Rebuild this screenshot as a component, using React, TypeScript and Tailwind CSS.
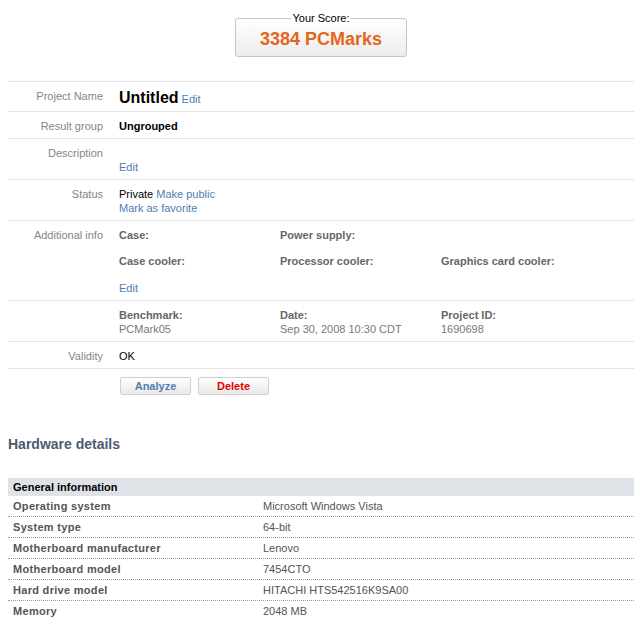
import React from 'react';

const link = 'text-[#4f7db3] cursor-pointer';

const Row = ({ label, children, border = true }: { label?: string; children: React.ReactNode; border?: boolean }) => (
  <div className={`flex items-start pt-[7px] pb-[5px] leading-[14px] ${border ? 'border-t border-[#e3e3e3]' : ''}`}>
    <div className="w-[95px] shrink-0 text-right text-[#858585]">{label}</div>
    <div className="ml-4 flex-1">{children}</div>
  </div>
);

const hardware = [
  ['Operating system', 'Microsoft Windows Vista'],
  ['System type', '64-bit'],
  ['Motherboard manufacturer', 'Lenovo'],
  ['Motherboard model', '7454CTO'],
  ['Hard drive model', 'HITACHI HTS542516K9SA00'],
  ['Memory', '2048 MB'],
];

const App = () => {
  return (
    <div className="w-[639px] h-[620px] overflow-hidden bg-white pl-2 pr-[5px] text-[11px] text-black font-['Liberation_Sans',Arial,sans-serif]">
      {/* score box */}
      <div className="flex justify-center pt-[18px]">
        <div className="relative flex h-[39px] w-[172px] items-center justify-center rounded-[3px] border border-[#c6c6c6] bg-gradient-to-b from-white to-[#ececec]">
          <span className="absolute -top-[8px] left-1/2 -translate-x-1/2 bg-white px-[1px] leading-[14px]">Your Score:</span>
          <span className="mt-[4px] text-[18px] font-bold text-[#e2661c]">3384 PCMarks</span>
        </div>
      </div>

      <div className="mt-[24px]">
        <Row label="Project Name">
          <span className="text-[16px] font-bold leading-[17px]">Untitled</span> <span className={link}>Edit</span>
        </Row>
        <Row label="Result group">
          <span className="font-bold">Ungrouped</span>
        </Row>
        <Row label="Description">
          <div className="h-[14px]" />
          <div className={link}>Edit</div>
        </Row>
        <Row label="Status">
          <div>
            Private <span className={link}>Make public</span>
          </div>
          <div className={link}>Mark as favorite</div>
        </Row>
        <Row label="Additional info">
          <div className="grid grid-cols-[161px_161px_161px] gap-y-[12px] font-bold text-[#666]">
            <div>Case:</div>
            <div>Power supply:</div>
            <div />
            <div>Case cooler:</div>
            <div>Processor cooler:</div>
            <div>Graphics card cooler:</div>
          </div>
          <div className={`mt-[13px] ${link}`}>Edit</div>
        </Row>
        <Row>
          <div className="grid grid-cols-[161px_161px_161px] text-[#777]">
            <div>
              <div className="font-bold text-[#666]">Benchmark:</div>
              <div>PCMark05</div>
            </div>
            <div>
              <div className="font-bold text-[#666]">Date:</div>
              <div>Sep 30, 2008 10:30 CDT</div>
            </div>
            <div>
              <div className="font-bold text-[#666]">Project ID:</div>
              <div>1690698</div>
            </div>
          </div>
        </Row>
        <Row label="Validity">OK</Row>
        <div className="flex border-t border-[#e3e3e3] pt-[8px] pl-[112px] gap-[7px]">
          <button className="h-[18px] w-[71px] rounded-[2px] border border-[#cfcfcf] bg-gradient-to-b from-white to-[#e9e9e9] text-[11px] font-bold text-[#4f7db3]">
            Analyze
          </button>
          <button className="h-[18px] w-[71px] rounded-[2px] border border-[#cfcfcf] bg-gradient-to-b from-white to-[#e9e9e9] text-[11px] font-bold text-[#e00000]">
            Delete
          </button>
        </div>
      </div>

      <h2 className="mt-[41px] text-[14px] font-bold leading-[17px] text-[#4e5a71]">Hardware details</h2>

      <div className="mt-[25px]">
        <div className="flex h-[18px] items-center bg-[#dfe3e8] px-[5px] font-bold">General information</div>
        {hardware.map(([k, v]) => (
          <div key={k} className="flex h-[21px] items-center border-b border-dotted border-[#9a9a9a] px-[5px] pt-[1px] text-[#555]">
            <div className="w-[250px] shrink-0 font-bold tracking-[0.3px]">{k}</div>
            <div>{v}</div>
          </div>
        ))}
      </div>
    </div>
  );
};

export default App;
